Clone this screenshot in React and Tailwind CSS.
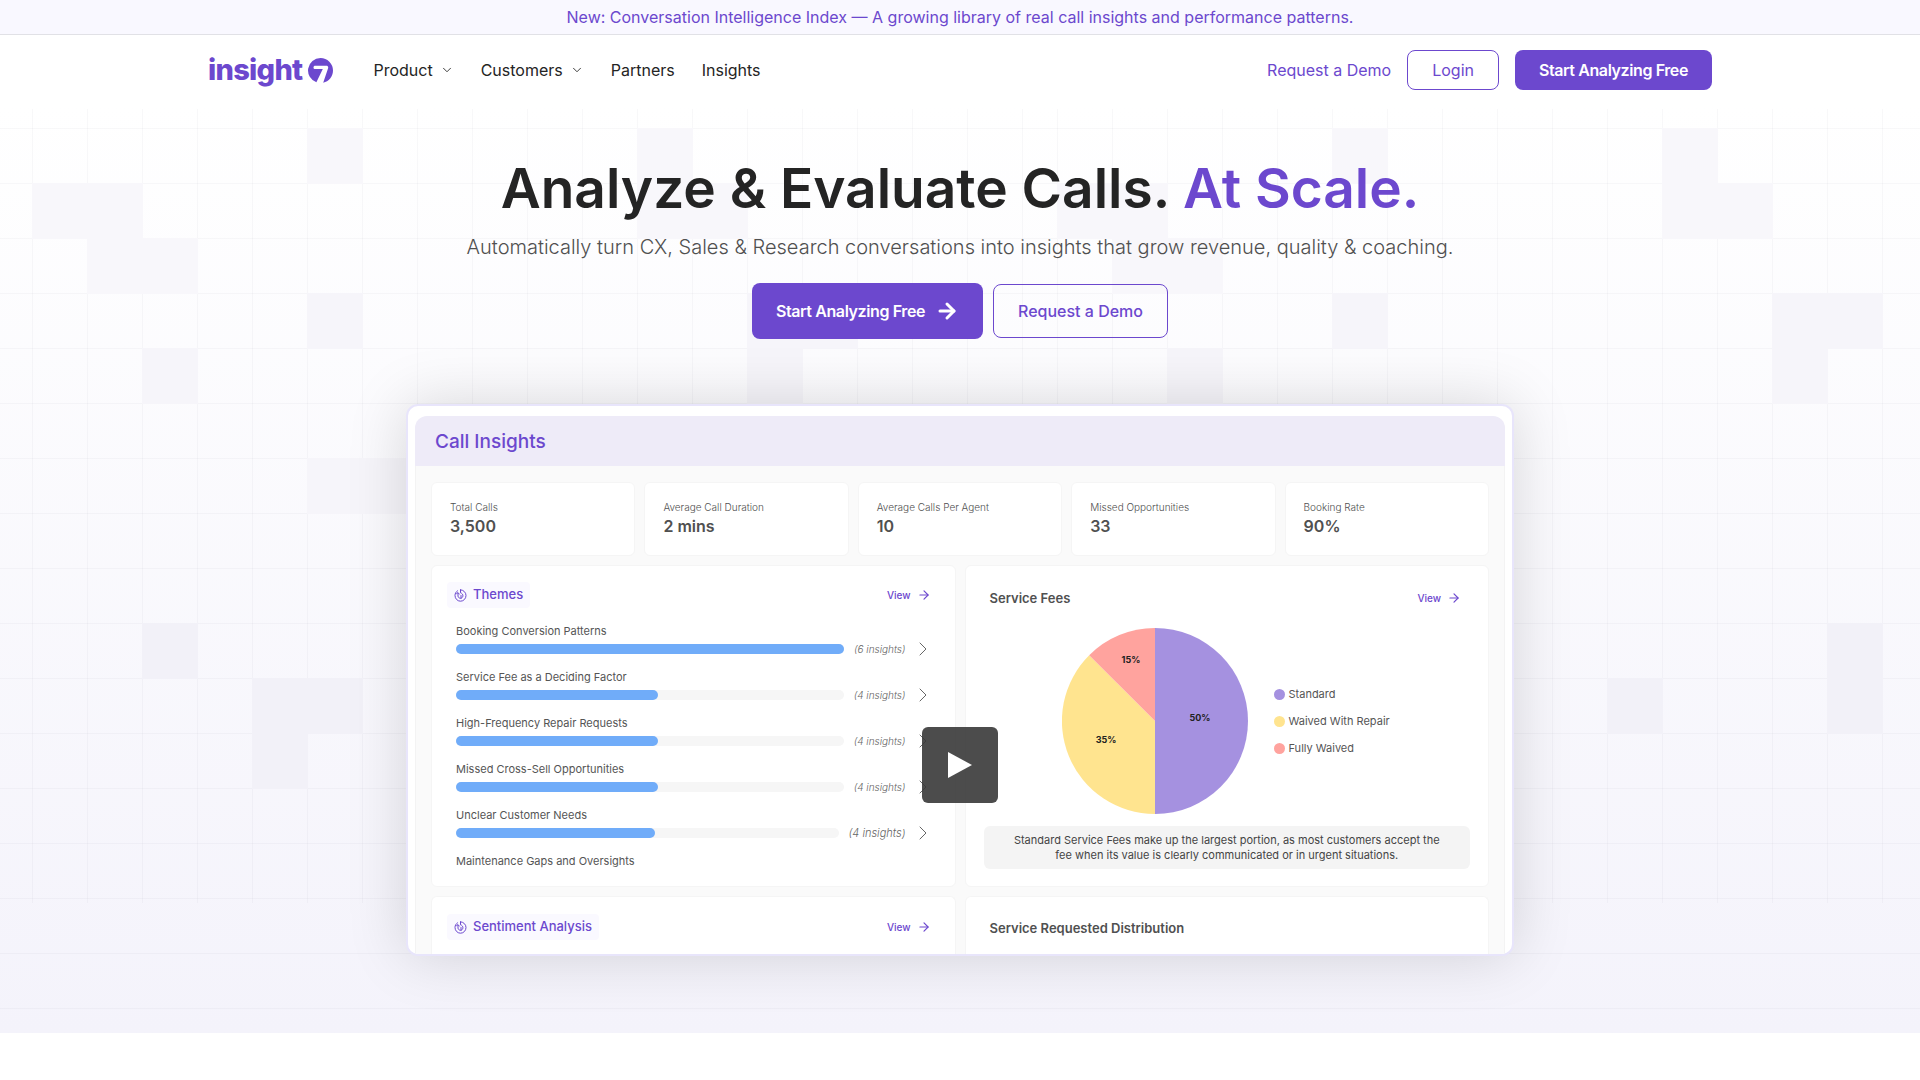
import clsx from 'clsx'
import { ArrowRight, ChevronDown, ChevronRight } from 'lucide-react'

const stats = [
  { label: 'Total Calls', value: '3,500' },
  { label: 'Average Call Duration', value: '2 mins' },
  { label: 'Average Calls Per Agent', value: '10' },
  { label: 'Missed Opportunities', value: '33' },
  { label: 'Booking Rate', value: '90%' },
]

const themes = [
  { name: 'Booking Conversion Patterns', count: 6, fill: 100 },
  { name: 'Service Fee as a Deciding Factor', count: 4, fill: 52 },
  { name: 'High-Frequency Repair Requests', count: 4, fill: 52 },
  { name: 'Missed Cross-Sell Opportunities', count: 4, fill: 52 },
  { name: 'Unclear Customer Needs', count: 4, fill: 52, large: true },
]

const legend = [
  { name: 'Standard', dot: 'bg-[#a591e0]' },
  { name: 'Waived With Repair', dot: 'bg-[#ffe48f]' },
  { name: 'Fully Waived', dot: 'bg-[#ffa39e]' },
]

// column, row and width (in cells) of the shaded squares in the backdrop
const squares = [
  [5, 0, 1], [11, 0, 1],
  [0, 1, 2], [11, 1, 2],
  [1, 2, 2],
  [5, 3, 1], [13, 3, 2],
  [2, 4, 1], [13, 4, 1],
  [5, 6, 2],
  [2, 9, 1], [14, 9, 1],
  [4, 10, 2], [10, 10, 1], [14, 10, 1],
  [4, 11, 1],
]

function GridBackdrop() {
  return (
    <svg className="absolute inset-0 w-full h-full" aria-hidden="true">
      <defs>
        <pattern id="cells" width="1025" height="927" patternUnits="userSpaceOnUse">
          {Array.from({ length: 19 }, (_, i) => (
            <rect key={i} x={32 + i * 55} y="4" width="1" height="794" fill="#2b2b50" fillOpacity="0.03" />
          ))}
          {Array.from({ length: 17 }, (_, i) => (
            <rect key={i} x="0" y={23 + i * 55} width="1025" height="1" fill="#2b2b50" fillOpacity="0.03" />
          ))}
          {squares.map(([col, row, span]) => (
            <rect
              key={`${col}-${row}`}
              x={32 + col * 55}
              y={23 + row * 55}
              width={span * 55 + 1}
              height="56"
              fill={row < 3 ? '#f8f7fb' : row < 8 ? '#f6f5fa' : '#f2f1f8'}
            />
          ))}
        </pattern>
      </defs>
      <rect width="100%" height="100%" fill="url(#cells)" />
    </svg>
  )
}

function Logo() {
  return (
    <a href="#" aria-label="insight7" className="flex items-center gap-[6px] text-[#6c48ce]">
      <span className="text-[29px] leading-8 font-extrabold tracking-tight">insight</span>
      <svg width="25" height="25" viewBox="0 0 25 25">
        <path
          fill="currentColor"
          d="M12.5 0A12.5 12.5 0 0 1 25 12.5c0 6-4.200 11-9.800 12.200L20 10.500c.6-1.600-.2-2.700-1.800-2.700H7.200c-1 0-1.700.7-1.700 1.600s.7 1.600 1.700 1.600h7.600L8.400 24.300A12.500 12.500 0 0 1 12.500 0Z"
        />
      </svg>
    </a>
  )
}

function Header() {
  return (
    <header>
      <div className="h-[35px] bg-[#f9f8ff] border-b border-[#e1e1e6] flex items-center justify-center">
        <a href="#" className="text-base text-[#6c48ce]">
          New: Conversation Intelligence Index — A growing library of real call insights and performance patterns.
        </a>
      </div>
      <div className="max-w-[1504px] mx-auto h-[70px] flex items-center justify-between">
        <div className="flex items-center gap-10">
          <Logo />
          <nav className="flex items-center gap-[27px] text-base text-[#242424]">
            <a href="#" className="flex items-center gap-[7px]">Product <ChevronDown size={14} strokeWidth={1.5} /></a>
            <a href="#" className="flex items-center gap-[7px]">Customers <ChevronDown size={14} strokeWidth={1.5} /></a>
            <a href="#">Partners</a>
            <a href="#">Insights</a>
          </nav>
        </div>
        <div className="flex items-center gap-4 text-base">
          <a href="#" className="text-[#6c48ce]">Request a Demo</a>
          <button className="h-10 px-6 rounded-lg border border-[#6c48ce] text-[#6c48ce]">Login</button>
          <button className="h-10 px-6 rounded-lg bg-[#6c48ce] text-white font-semibold tracking-tight">Start Analyzing Free</button>
        </div>
      </div>
    </header>
  )
}

function Swirl() {
  return (
    <svg width="13" height="13" viewBox="0 0 13 13" fill="none" stroke="currentColor" strokeWidth="1" strokeLinecap="round" strokeLinejoin="round">
      <path d="M6.500.8c3 .2 5.500 2.600 5.500 5.700s-2.400 5.700-5.500 5.700S1 9.600 1 6.500c0-2 1-3.700 2.500-4.700" />
      <path d="M6.500.8v3c1.500.4 2.400 1.600 2.400 3S7.700 9.300 6.500 9.300 4 8.300 4 7V4.200" />
      <path d="M2.600 4.600 4 3.600l1.300 1.500M7 6.500v2.700" />
    </svg>
  )
}

function Badge({ children }) {
  return (
    <h3 className="h-[26px] px-[7px] flex items-center gap-[6px] bg-[#faf9ff] rounded text-[13px] font-medium text-[#6c48ce]">
      <Swirl />
      {children}
    </h3>
  )
}

function ViewLink() {
  return (
    <a href="#" className="flex items-center gap-[6px] text-[10px] font-medium text-[#6c48ce]">
      View <ArrowRight size={14} strokeWidth={2} />
    </a>
  )
}

function ThemesPanel() {
  return (
    <section className="bg-white border border-[#f5f5f5] rounded-md h-[322px]">
      <div className="pl-[15px] pr-6 pt-4 flex items-center justify-between">
        <Badge>Themes</Badge>
        <ViewLink />
      </div>
      <ul className="pl-6 pr-5 pt-[15px] text-[#555]">
        {themes.map((t) => (
          <li key={t.name} className="h-[46px]">
            <p className="text-[11px] leading-4">{t.name}</p>
            <div className="flex items-center h-[20px]">
              <div className="flex-1 h-[10px] rounded-full bg-[#f6f6f6]">
                <div className="h-full rounded-full bg-[#70acf9]" style={{ width: `${t.fill}%` }} />
              </div>
              <span className={clsx('ml-[10px] italic font-light text-[#666]', t.large ? 'text-[11px]' : 'text-[10px]')}>({t.count} insights)</span>
              <ChevronRight size={24} strokeWidth={1} className="ml-[5px] text-[#666]" />
            </div>
          </li>
        ))}
        <li className="text-[11px] leading-4">Maintenance Gaps and Oversights</li>
      </ul>
    </section>
  )
}

function FeesPanel() {
  return (
    <section className="bg-white border border-[#f5f5f5] rounded-md h-[322px] px-[18px]">
      <div className="pl-[6px] pr-[9px] pt-[22px] flex items-center justify-between">
        <h3 className="text-[13px] leading-5 font-semibold text-[#505050]">Service Fees</h3>
        <ViewLink />
      </div>
      <div className="pt-5 pl-[78px] flex items-center gap-[26px]">
        <svg width="186" height="186" viewBox="-93 -93 186 186" className="text-[9px] font-bold" role="img" aria-label="Service fee split">
          <path d="M0 0V-93A93 93 0 0 1 0 93Z" fill="#a591e0" />
          <path d="M0 0V93A93 93 0 0 1-65.800-65.800Z" fill="#ffe48f" />
          <path d="M0 0-65.800-65.800A93 93 0 0 1 0-93Z" fill="#ffa39e" />
          <g textAnchor="middle" fill="#222">
            <text x="45" y="0">50%</text>
            <text x="-49" y="22">35%</text>
            <text x="-24" y="-58">15%</text>
          </g>
        </svg>
        <ul className="flex flex-col gap-[11px] text-[11px] leading-4 text-[#555]">
          {legend.map((item) => (
            <li key={item.name} className="flex items-center gap-1">
              <span className={clsx('w-[11px] h-[11px] rounded-full', item.dot)} />
              {item.name}
            </li>
          ))}
        </ul>
      </div>
      <p className="mt-3 h-[43px] px-5 flex items-center justify-center rounded-md bg-[#f4f4f4] text-center text-[11px] leading-[15px] text-[#444]">
        <span>
          Standard Service Fees make up the largest portion, as most customers accept the
          <br />
          fee when its value is clearly communicated or in urgent situations.
        </span>
      </p>
    </section>
  )
}

function Preview() {
  return (
    <div className="relative max-w-[1108px] mx-auto mt-[65px] rounded-xl border-2 border-[#e8e5fb] bg-white overflow-hidden shadow-[0_0_60px_rgba(0,0,0,0.15)]">
      <div className="px-[7px] pt-[10px]">
        <h2 className="h-[50px] pl-5 pt-[2px] flex items-center rounded-t-xl bg-[#eeebf8] text-[19px] font-medium text-[#6c48ce]">
          Call Insights
        </h2>
        <div className="bg-[#fafafa] border-x border-[#f3f3f3] px-[15px] pt-4">
          <div className="grid grid-cols-5 gap-[9px]">
            {stats.map((s) => (
              <div key={s.label} className="h-[74px] pl-[18px] pt-4 bg-white border border-[#f5f5f5] rounded-md text-[#505050]">
                <p className="text-[10px] leading-4 font-light">{s.label}</p>
                <p className="text-base leading-[22px] font-semibold">{s.value}</p>
              </div>
            ))}
          </div>
          <div className="grid grid-cols-2 gap-[9px] pt-[9px]">
            <ThemesPanel />
            <FeesPanel />
            <section className="bg-white border border-b-0 border-[#f5f5f5] rounded-t-md h-[58px]">
              <div className="pl-[15px] pr-6 pt-[17px] flex items-center justify-between">
                <Badge>Sentiment Analysis</Badge>
                <ViewLink />
              </div>
            </section>
            <section className="bg-white border border-b-0 border-[#f5f5f5] rounded-t-md h-[58px] pl-6 pt-[21px]">
              <h3 className="text-[13px] leading-5 font-semibold text-[#505050]">Service Requested Distribution</h3>
            </section>
          </div>
        </div>
      </div>
      <button aria-label="Play video" className="absolute top-[321px] left-1/2 -translate-x-1/2 w-[76px] h-[76px] rounded-md bg-[#383838]/90 flex items-center justify-center">
        <svg width="24" height="26" viewBox="0 0 24 26" fill="#fff"><path d="M0 0 24 13 0 26Z" /></svg>
      </button>
    </div>
  )
}

export default function App() {
  return (
    <div className="bg-white font-['Inter',sans-serif]">
      <Header />
      <main className="relative bg-gradient-to-b from-white to-[#f4f3fb] pt-[53px] pb-[77px]">
        <GridBackdrop />
        <div className="relative flex flex-col items-center text-center">
          <h1 className="text-[55px] leading-[60px] font-semibold text-[#242424]">
            Analyze &amp; Evaluate Calls. <span className="text-[#6c48ce]">At Scale.</span>
          </h1>
          <p className="mt-[15px] text-[20px] leading-7 font-light text-[#505050]">
            Automatically turn CX, Sales &amp; Research conversations into insights that grow revenue, quality &amp; coaching.
          </p>
          <div className="mt-[22px] flex items-center gap-[10px] text-base">
            <button className="h-14 px-6 rounded-lg bg-[#6c48ce] text-white font-semibold tracking-tight flex items-center gap-[10px]">
              Start Analyzing Free <ArrowRight size={24} strokeWidth={3} />
            </button>
            <button className="h-[54px] px-6 rounded-lg border border-[#6c48ce] text-[#6c48ce] font-medium">Request a Demo</button>
          </div>
        </div>
        <Preview />
      </main>
    </div>
  )
}
